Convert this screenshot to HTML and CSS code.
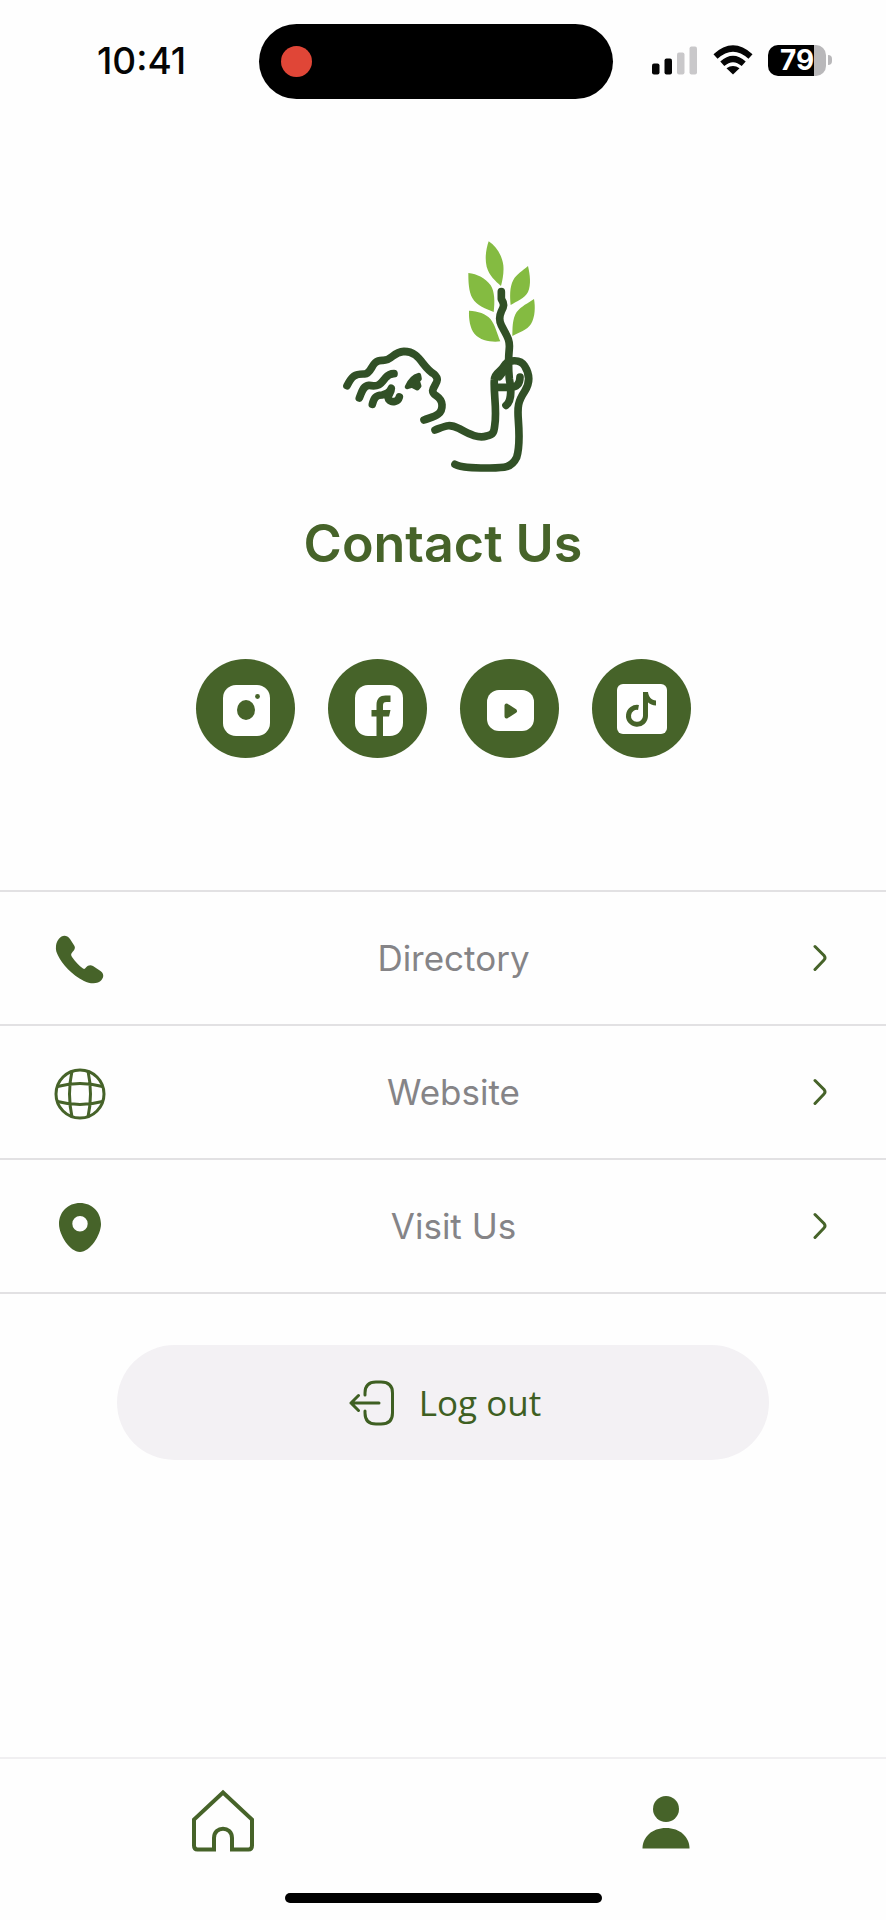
FILE: index.html
```html
<!DOCTYPE html>
<html lang="en">
<head>
<meta charset="utf-8">
<meta name="viewport" content="width=device-width, initial-scale=1">
<title>Contact Us</title>
<link rel="stylesheet" href="styles.css">
</head>
<body class="screen">
<header class="status">
  <time class="status-time">10:41</time>
  <div class="island"><span class="record-dot"></span></div>
  <div class="status-icons">
    <svg class="signal" viewBox="0 0 46 30" aria-hidden="true">
      <rect x="0" y="18.500" width="7.500" height="11" rx="2"/>
      <rect x="12.500" y="13.500" width="7.500" height="16" rx="2"/>
      <rect class="dim" x="25" y="7.500" width="7.500" height="22" rx="2"/>
      <rect class="dim" x="37.500" y="1.500" width="7.500" height="28" rx="2"/>
    </svg>
    <svg class="wifi" viewBox="0 0 40 30" aria-hidden="true">
      <path class="wifi-arc" d="M2.500 11.500Q20 -4.500 37.500 11.500M9.300 18.800Q20 9.200 30.700 18.800"/>
      <path d="M20 29.500L13.500 23.300Q20 18.600 26.500 23.300Z"/>
    </svg>
    <div class="battery"><span class="battery-body">79</span><span class="battery-tip"></span></div>
  </div>
</header>

<main class="content">
  <svg class="logo" viewBox="0 0 678 750" role="img" aria-label="Figure holding a branch">
    <g class="leaf">
      <path d="M476 34C498 48 516 74 520 106C522 128 518 148 513 168C496 152 478 138 470 110C464 84 468 58 476 34Z"/>
      <path d="M415 129C442 132 466 144 482 166C494 184 495 216 491 246C468 236 440 228 427 204C416 184 415 156 415 129Z"/>
      <path d="M417 242C444 244 468 250 482 268C496 286 502 314 511 334C486 337 452 333 434 312C420 294 416 268 417 242Z"/>
      <path d="M594 108C600 134 604 164 594 186C584 206 560 214 542 225C540 202 538 172 550 150C560 132 578 122 594 108Z"/>
      <path d="M612 207C616 230 616 260 603 282C592 300 566 308 547 318C548 296 546 268 560 246C574 228 594 220 612 207Z"/>
    </g>
    <g class="line">
      <path d="M514 185V207C524 222 522 230 514 244C506 262 508 274 514 286C528 314 540 326 538 354C535 384 535 416 538 446C546 486 542 516 528 526"/>
      <path d="M51 467C66 438 74 431 104 432C128 430 122 390 158 391C188 392 186 366 222 364C270 364 276 412 312 432C334 452 312 462 308 482C308 500 334 496 336 524C338 558 306 560 282 570"/>
      <path d="M88 504C96 486 98 468 116 466C146 472 152 462 166 444C176 432 184 431 192 431"/>
      <path d="M127 523C132 502 138 496 156 495C174 492 180 484 184 475C184 490 170 496 176 508C186 520 204 516 208 501"/>
      <path d="M315 600C346 588 356 580 388 596C420 614 446 626 470 618C490 614 492 606 494 588C502 540 490 490 493 450C494 426 512 428 522 408C536 386 572 388 584 408C598 430 602 456 584 484C564 514 562 530 565 570C568 610 570 650 560 682C544 716 520 714 470 714C434 714 396 714 375 703"/>
      <path d="M498 472H538C558 472 570 464 570 441M530 412L508 440"/>
    </g>
    <path class="eye" d="M266 436C250 440 240 452 232 470L246 466L262 474L267 468L262 452L268 446Z"/>
  </svg>

  <h1 class="title">Contact Us</h1>

  <nav class="social" aria-label="Social media">
    <a class="social-link" href="#instagram" aria-label="Instagram">
      <svg viewBox="0 0 99 99"><rect class="white" x="27" y="26" width="47" height="51" rx="13"/><ellipse cx="50" cy="51" rx="9" ry="10"/><circle cx="61.500" cy="37.500" r="2.400"/></svg>
    </a>
    <a class="social-link" href="#facebook" aria-label="Facebook">
      <svg viewBox="0 0 99 99"><rect class="white" x="27" y="26" width="48" height="51" rx="13"/><path d="M48.500 78V57.500H43.500V51H48.500V46C48.500 39.500 52 36.500 57.500 36.500H62.500V43H58.500C56 43 55 44 55 46.500V51H62.500L61 57.500H55V78Z"/></svg>
    </a>
    <a class="social-link" href="#youtube" aria-label="YouTube">
      <svg viewBox="0 0 99 99"><rect class="white" x="27" y="31" width="47" height="41" rx="12"/><path class="play" d="M46.500 46.500V57.500L55 52Z"/></svg>
    </a>
    <a class="social-link" href="#tiktok" aria-label="TikTok">
      <svg viewBox="0 0 99 99"><rect class="white" x="25" y="25" width="50" height="50" rx="6"/><path class="note" d="M46.500 48.500A8.500 8.500 0 1 0 53.500 57V33"/><path d="M51 33H56C56.500 38 59.500 41 64 41.500V46.500C60.500 46.500 58 45 55.500 43Z"/></svg>
    </a>
  </nav>

  <nav class="menu" aria-label="Contact options">
    <a class="row" href="#directory">
      <svg class="row-icon" viewBox="0 0 56 56" aria-hidden="true"><path d="M4 14C5 5 13 0 18 7L22.500 14C23.500 16 22.500 18 20.500 20C18.500 22 19 23.500 20 25C23.500 30 27 33.500 31 36.500C32.500 37.500 33 36.500 34 35.500C36 33 38.500 32.500 41 34L48.500 39C52 41.500 52 45 49.500 48C46 52.500 38 52 32 49C20 43 10 32 6 23.500C4.500 20.500 3.500 18 4 14Z"/></svg>
      <span>Directory</span>
      <svg class="chevron" viewBox="0 0 28 28" aria-hidden="true"><path d="M16 2.500L25 11.500Q27 14 25 16L16 25.500"/></svg>
    </a>
    <a class="row" href="#website">
      <svg class="row-icon globe" viewBox="0 0 56 56" aria-hidden="true"><circle cx="28" cy="28" r="24"/><path d="M20 5Q15 28 20 51M36 5Q41 28 36 51M5.500 20.500Q28 14.500 50.500 20.500M5.500 35.500Q28 41.500 50.500 35.500"/></svg>
      <span>Website</span>
      <svg class="chevron" viewBox="0 0 28 28" aria-hidden="true"><path d="M16 2.500L25 11.500Q27 14 25 16L16 25.500"/></svg>
    </a>
    <a class="row" href="#visit">
      <svg class="row-icon" viewBox="0 0 56 56" aria-hidden="true"><path fill-rule="evenodd" d="M28 3C40 3 49 12 49 24C49 35 38 52 28 52S7 35 7 24C7 12 16 3 28 3ZM28 16A7.700 7.700 0 1 0 28 31.400A7.700 7.700 0 1 0 28 16Z"/></svg>
      <span>Visit Us</span>
      <svg class="chevron" viewBox="0 0 28 28" aria-hidden="true"><path d="M16 2.500L25 11.500Q27 14 25 16L16 25.500"/></svg>
    </a>
  </nav>

  <button class="logout" type="button">
    <svg class="logout-icon" viewBox="0 0 46 46" aria-hidden="true"><path d="M16 15V13Q16 2 27 2H32Q43.500 2 43.500 13V33Q43.500 44 32 44H27Q16 44 16 33V31M30 23H2M9.500 15.500L2 23L9.500 30.500"/></svg>
    <span>Log out</span>
  </button>
</main>

<nav class="tabs" aria-label="Main">
  <a class="tab" href="#home" aria-label="Home">
    <svg viewBox="0 0 64 64"><path class="outline" d="M33 3.500L62 30.500V56.500Q62 60.500 58.500 60.500H42V49C42 36.500 24 36.500 24 49V60.500H7.500Q4 60.500 4 56.500V30.500Z"/></svg>
  </a>
  <a class="tab" href="#profile" aria-label="Profile" aria-current="page">
    <svg viewBox="0 0 64 64"><circle cx="33" cy="20" r="13"/><path d="M9.500 59.500C9.500 48 19 39 33 39S56.500 48 56.500 59.500Z"/></svg>
  </a>
</nav>
<div class="home-bar"></div>
</body>
</html>
```
FILE: styles.css
```css
:root {
  --green: #466329;
  --line: #e2e1e3;
}

* {
  box-sizing: border-box;
}

.screen {
  margin: 0;
  min-height: 100vh;
  display: flex;
  flex-direction: column;
  background: #fefefe;
  color: var(--green);
  font-family: Inter, "Open Sans", sans-serif;
}

svg {
  display: block;
  fill: currentColor;
}

a {
  color: inherit;
  text-decoration: none;
}

/* Status bar */
.status {
  display: grid;
  grid-template-columns: 259fr 354px 273fr;
  align-items: center;
  padding-top: 24px;
  color: #050505;
}

.status-time {
  padding: 0 0 2px 24px;
  text-align: center;
  font-size: 37px;
  line-height: 44px;
  font-weight: 500;
}

.island {
  display: flex;
  align-items: center;
  height: 75px;
  padding-left: 22px;
  border-radius: 38px;
  background: #000;
}

.record-dot {
  width: 31px;
  height: 31px;
  border-radius: 50%;
  background: #e04637;
}

.status-icons {
  display: flex;
  align-items: center;
  justify-content: flex-end;
  gap: 15px;
  padding: 0 54px 3px 0;
}

.signal {
  width: 46px;
  height: 30px;
}

.dim {
  fill: #c9c8ca;
}

.wifi {
  width: 40px;
  height: 30px;
}

.wifi-arc {
  fill: none;
  stroke: currentColor;
  stroke-width: 6;
}

.battery {
  display: flex;
  align-items: center;
  gap: 2px;
}

.battery-body {
  width: 58px;
  height: 31px;
  border-radius: 10px;
  background: linear-gradient(90deg, #000 46px, #b9b8ba 46px);
  color: #fff;
  font-size: 28px;
  line-height: 31px;
  font-weight: 700;
  text-align: center;
}

.battery-tip {
  width: 4px;
  height: 10px;
  border-radius: 0 4px 4px 0;
  background: #b9b8ba;
}

/* Content */
.content {
  display: flex;
  flex-direction: column;
  align-items: center;
  padding-top: 131px;
}

.logo {
  width: 226px;
  height: 250px;
}

.leaf {
  fill: #84bb41;
}

.line {
  fill: none;
  stroke: #315026;
  stroke-width: 23;
  stroke-linecap: round;
  stroke-linejoin: round;
}

.eye {
  fill: #315026;
  stroke: #315026;
  stroke-width: 15;
  stroke-linejoin: round;
}

.title {
  margin: 32px 0 0;
  font-size: 52px;
  line-height: 64px;
  font-weight: 600;
}

.social {
  display: flex;
  gap: 33px;
  margin-top: 83px;
}

.social-link {
  width: 99px;
  height: 99px;
  border-radius: 50%;
  background: var(--green);
}

.white {
  fill: #fff;
}

.play {
  stroke: currentColor;
  stroke-width: 4;
  stroke-linejoin: round;
}

.note {
  fill: none;
  stroke: currentColor;
  stroke-width: 5;
}

.menu {
  align-self: stretch;
  margin-top: 132px;
  border-top: 2px solid var(--line);
}

.row {
  display: grid;
  grid-template-columns: 56px 1fr 28px;
  align-items: center;
  height: 134px;
  padding: 0 59px 0 52px;
  border-bottom: 2px solid var(--line);
  color: #858487;
  font-size: 35px;
  line-height: 44px;
  font-weight: 400;
  text-align: center;
}

.row-icon {
  width: 56px;
  height: 56px;
  margin-top: 4px;
  color: var(--green);
}

.globe {
  fill: none;
  stroke: currentColor;
  stroke-width: 3;
}

.chevron {
  width: 28px;
  height: 28px;
  fill: none;
  stroke: var(--green);
  stroke-width: 3;
  stroke-linecap: round;
}

.logout {
  display: flex;
  align-items: center;
  justify-content: center;
  gap: 24px;
  width: 652px;
  max-width: 90%;
  height: 115px;
  margin-top: 51px;
  padding: 0 0 0 4px;
  border: 0;
  border-radius: 58px;
  background: #f3f1f4;
  color: #3e5f22;
  font-family: "Open Sans", sans-serif;
  font-size: 35px;
  line-height: 48px;
}

.logout-icon {
  width: 46px;
  height: 46px;
  fill: none;
  stroke: currentColor;
  stroke-width: 3;
  stroke-linecap: round;
  stroke-linejoin: round;
}

/* Bottom tabs */
.tabs {
  display: grid;
  grid-template-columns: 1fr 1fr;
  margin-top: auto;
  padding-top: 30px;
  border-top: 2px solid #f0eff1;
}

.tab {
  display: flex;
  justify-content: center;
}

.tab svg {
  width: 64px;
  height: 64px;
}

.outline {
  fill: none;
  stroke: currentColor;
  stroke-width: 4;
}

.home-bar {
  align-self: center;
  width: 317px;
  height: 10px;
  margin: 40px 0 17px;
  border-radius: 5px;
  background: #000;
}
```
